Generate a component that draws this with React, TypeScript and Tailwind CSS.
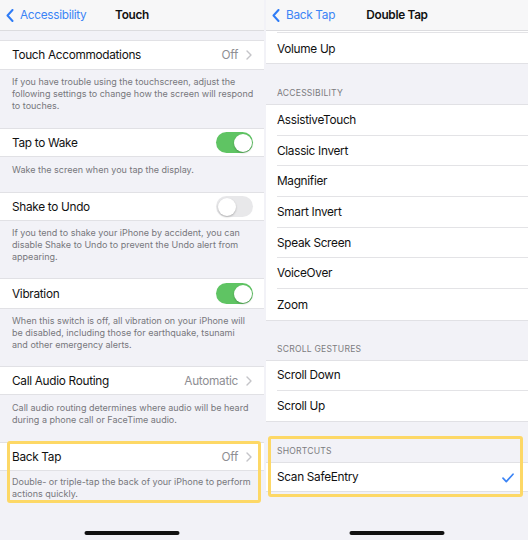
import React from 'react';

type Section = {
  label: string;
  value?: string;
  toggle?: 'on' | 'off';
  rowClass: string;
  footClass: string;
  lines: string[];
};

const leftSections: Section[] = [
  {
    label: 'Touch Accommodations',
    value: 'Off',
    rowClass: 'h-[30px]',
    footClass: 'pt-[6px] pb-[16px]',
    lines: [
      'If you have trouble using the touchscreen, adjust the',
      'following settings to change how the screen will respond',
      'to touches.',
    ],
  },
  {
    label: 'Tap to Wake',
    toggle: 'on',
    rowClass: 'h-[29px]',
    footClass: 'pt-[7px] pb-[16px]',
    lines: ['Wake the screen when you tap the display.'],
  },
  {
    label: 'Shake to Undo',
    toggle: 'off',
    rowClass: 'h-[29px]',
    footClass: 'pt-[6px] pb-[15px]',
    lines: [
      'If you tend to shake your iPhone by accident, you can',
      'disable Shake to Undo to prevent the Undo alert from',
      'appearing.',
    ],
  },
  {
    label: 'Vibration',
    toggle: 'on',
    rowClass: 'h-[31px]',
    footClass: 'pt-[6px] pb-[15px]',
    lines: [
      'When this switch is off, all vibration on your iPhone will',
      'be disabled, including those for earthquake, tsunami',
      'and other emergency alerts.',
    ],
  },
  {
    label: 'Call Audio Routing',
    value: 'Automatic',
    rowClass: 'h-[29px]',
    footClass: 'pt-[7px] pb-[16px]',
    lines: [
      'Call audio routing determines where audio will be heard',
      'during a phone call or FaceTime audio.',
    ],
  },
  {
    label: 'Back Tap',
    value: 'Off',
    rowClass: 'h-[29px]',
    footClass: 'pt-[5px] pb-[10px]',
    lines: [
      'Double- or triple-tap the back of your iPhone to perform',
      'actions quickly.',
    ],
  },
];

const accessibilityItems = [
  'AssistiveTouch',
  'Classic Invert',
  'Magnifier',
  'Smart Invert',
  'Speak Screen',
  'VoiceOver',
  'Zoom',
];

function BackChevron() {
  return (
    <svg width="8" height="13" viewBox="0 0 8 13" fill="none">
      <path d="M6.5 1 L1.5 6.5 L6.5 12" stroke="#2f7cf6" strokeWidth="2" strokeLinecap="round" strokeLinejoin="round" />
    </svg>
  );
}

function RowChevron() {
  return (
    <svg width="6" height="10" viewBox="0 0 6 10" fill="none">
      <path d="M1 1 L5 5 L1 9" stroke="#c4c4c8" strokeWidth="1.4" strokeLinecap="round" strokeLinejoin="round" />
    </svg>
  );
}

function NavBar({ back, title }: { back: string; title: string }) {
  return (
    <div className="grid h-[31px] grid-cols-[1fr_auto_1fr] items-center border-b border-[#dcdcdf] bg-[#f7f7f8] pt-[2px] text-[11.8px] tracking-[-0.3px]">
      <div className="flex items-center gap-[6px] pl-[6px] text-[#3b84f6]">
        <span className="-mt-[2px]">
          <BackChevron />
        </span>
        <span>{back}</span>
      </div>
      <div className="font-semibold text-[#111]">{title}</div>
      <div />
    </div>
  );
}

function Toggle({ on }: { on: boolean }) {
  return (
    <div
      className={
        on
          ? 'flex h-[21px] w-[37px] items-center justify-end rounded-full bg-[#5fc463] p-[1.5px]'
          : 'flex h-[21px] w-[37px] items-center justify-start rounded-full bg-[#e8e8ea] p-[1.5px]'
      }
    >
      <div className="h-[18px] w-[18px] rounded-full bg-white shadow-[0_1px_2px_rgba(0,0,0,0.25)]" />
    </div>
  );
}

function HomeBar() {
  return <div className="absolute bottom-[5px] left-1/2 h-[4px] w-[95px] -translate-x-1/2 rounded-full bg-[#111]" />;
}

function TouchScreen() {
  return (
    <div className="relative h-[540px] w-[264px] shrink-0 overflow-hidden bg-[#f2f2f7]">
      <NavBar back="Accessibility" title="Touch" />
      <div className="h-[9px]" />
      {leftSections.map((s) => (
        <div key={s.label}>
          <div
            className={`flex items-center justify-between border-y border-[#e1e1e5] bg-white pl-[12px] pr-[12px] pt-[2px] text-[11.8px] tracking-[-0.3px] text-[#111] ${s.rowClass}`}
          >
            <span>{s.label}</span>
            {s.value && (
              <span className="flex items-center gap-[8px] text-[#8e8e93]">
                {s.value}
                <span className="-mt-[2px]">
                  <RowChevron />
                </span>
              </span>
            )}
            {s.toggle && (
              <span className="-mr-[1px] -mt-[2px]">
                <Toggle on={s.toggle === 'on'} />
              </span>
            )}
          </div>
          <div className={`px-[12px] text-[9px] leading-[12px] text-[#77777c] ${s.footClass}`}>
            {s.lines.map((l) => (
              <div key={l} className="whitespace-nowrap">
                {l}
              </div>
            ))}
          </div>
        </div>
      ))}
      <div className="absolute left-[7px] top-[441px] h-[62px] w-[254px] rounded-[3px] border-[3px] border-[#fdd866]" />
      <HomeBar />
    </div>
  );
}

function GroupHeader({ text, cls }: { text: string; cls: string }) {
  return (
    <div className={`flex items-end pb-[6px] pl-[11px] text-[8.6px] leading-[10px] tracking-[0.2px] text-[#7c7c80] ${cls}`}>
      {text}
    </div>
  );
}

function ListGroup({ items, rowClass }: { items: string[]; rowClass: string }) {
  return (
    <div className="border-y border-[#e1e1e5] bg-white pl-[11px]">
      {items.map((it, i) => (
        <div
          key={it}
          className={
            i < items.length - 1
              ? `flex items-center border-b border-[#e3e3e6] pt-[2px] text-[11.8px] tracking-[-0.3px] text-[#111] ${rowClass}`
              : `flex items-center pt-[2px] text-[11.8px] tracking-[-0.3px] text-[#111] ${rowClass}`
          }
        >
          {it}
        </div>
      ))}
    </div>
  );
}

function DoubleTapScreen() {
  return (
    <div className="relative h-[540px] flex-1 overflow-hidden bg-[#f2f2f7]">
      <NavBar back="Back Tap" title="Double Tap" />
      <div className="bg-white pl-[11px]">
        <div className="h-[2px] border-b border-[#e3e3e6]" />
      </div>
      <div className="flex h-[31px] items-center border-b border-[#e1e1e5] bg-white pl-[11px] pt-[3px] text-[11.8px] tracking-[-0.3px] text-[#111]">
        Volume Up
      </div>
      <GroupHeader text="ACCESSIBILITY" cls="h-[40px]" />
      <ListGroup items={accessibilityItems} rowClass="h-[30.7px]" />
      <GroupHeader text="SCROLL GESTURES" cls="h-[39px]" />
      <ListGroup items={['Scroll Down', 'Scroll Up']} rowClass="h-[30px]" />
      <GroupHeader text="SHORTCUTS" cls="h-[40px]" />
      <div className="flex h-[30px] items-center justify-between border-y border-[#e1e1e5] bg-white pl-[11px] pr-[14px] pt-[2px] text-[11.8px] tracking-[-0.3px] text-[#111]">
        <span>Scan SafeEntry</span>
        <svg width="12" height="10" viewBox="0 0 12 10" fill="none">
          <path d="M1 5.2 L4.3 8.6 L11 1.2" stroke="#3b84f6" strokeWidth="1.7" strokeLinecap="round" strokeLinejoin="round" />
        </svg>
      </div>
      <div className="absolute left-[2px] top-[436px] h-[61px] w-[255px] rounded-[3px] border-[3px] border-[#fdd866]" />
      <HomeBar />
    </div>
  );
}

export default function App() {
  return (
    <div className="flex h-[540px] w-[528px] gap-[2px] bg-[#f2f2f7] font-[Inter,'Noto_Sans',sans-serif] antialiased">
      <TouchScreen />
      <DoubleTapScreen />
    </div>
  );
}
